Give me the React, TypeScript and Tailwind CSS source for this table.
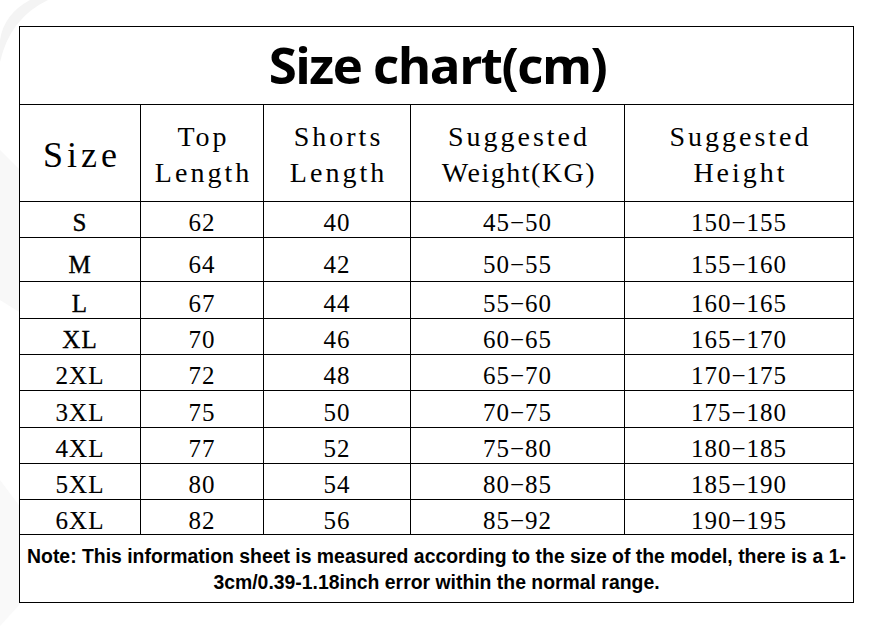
import React from "react";

const rows: [string, string, string, string, string][] = [
  ["S", "62", "40", "45−50", "150−155"],
  ["M", "64", "42", "50−55", "155−160"],
  ["L", "67", "44", "55−60", "160−165"],
  ["XL", "70", "46", "60−65", "165−170"],
  ["2XL", "72", "48", "65−70", "170−175"],
  ["3XL", "75", "50", "70−75", "175−180"],
  ["4XL", "77", "52", "75−80", "180−185"],
  ["5XL", "80", "54", "80−85", "185−190"],
  ["6XL", "82", "56", "85−92", "190−195"],
];

const serif = "font-['Liberation_Serif','Times_New_Roman',serif]";

export default function App() {
  return (
    <div className="relative w-[874px] h-[626px] bg-white overflow-hidden">
      <svg
        className="absolute inset-0 pointer-events-none"
        width="874"
        height="626"
        viewBox="0 0 874 626"
      >
        <path d="M0 62 Q10 18 48 0 L30 0 Q4 14 0 40 Z" fill="#f4f4f4" />
        <path d="M0 150 L40 190 L48 330 L0 300 Z" fill="#f8f8f8" />
        <path d="M0 480 L60 560 L0 626 Z" fill="#f9f9f9" />
      </svg>
      <div className="relative pt-[26px] pl-[19px]">
        <div className="grid w-[835px] bg-black p-px gap-px grid-cols-[120px_122px_146px_213px_228px] grid-rows-[77px_96px_35px_43px_36px_35px_35px_36px_35px_35px_34px_67px] text-black">
          <div className="col-span-5 bg-white flex items-center justify-center">
            <span className="font-['Open_Sans',sans-serif] font-bold text-[51px] leading-none tracking-[-1.5px] pb-[2px] pl-[2px]">
              Size chart(cm)
            </span>
          </div>

          <div className={`bg-white flex items-center justify-center pt-[4px] ${serif} text-[36px] tracking-[4px] pl-[4px]`}>
            Size
          </div>
          {[
            ["Top", "Length"],
            ["Shorts", "Length"],
            ["Suggested", "Weight(KG)"],
            ["Suggested", "Height"],
          ].map((h, i) => (
            <div
              key={i}
              className={`bg-white flex flex-col items-center justify-center pt-[4px] ${serif} text-[28px] leading-[36px] tracking-[3px] pl-[3px]`}
            >
              <span>{h[0]}</span>
              <span className={i === 2 ? "tracking-[1.5px]" : ""}>{h[1]}</span>
            </div>
          ))}

          {rows.map((r, ri) =>
            r.map((c, ci) => (
              <div
                key={`${ri}-${ci}`}
                className={`bg-white flex items-center justify-center pt-[6px] ${serif} text-[25px] leading-none ${
                  ci === 0
                    ? ri < 4
                      ? "tracking-[1px] [-webkit-text-stroke:0.35px_black]"
                      : "tracking-[1px] [-webkit-text-stroke:0.15px_black]"
                    : "tracking-[1px]"
                } ${ri === 1 ? "pt-[10px]" : ""}`}
              >
                {c}
              </div>
            ))
          )}

          <div className="col-span-5 bg-white flex flex-col items-center justify-center font-['Liberation_Sans',Arial,sans-serif] font-bold text-[19.4px] leading-[26px]">
            <span className="whitespace-nowrap">
              Note: This information sheet is measured according to the size of the model, there is a 1-
            </span>
            <span className="whitespace-nowrap">3cm/0.39-1.18inch error within the normal range.</span>
          </div>
        </div>
      </div>
    </div>
  );
}
